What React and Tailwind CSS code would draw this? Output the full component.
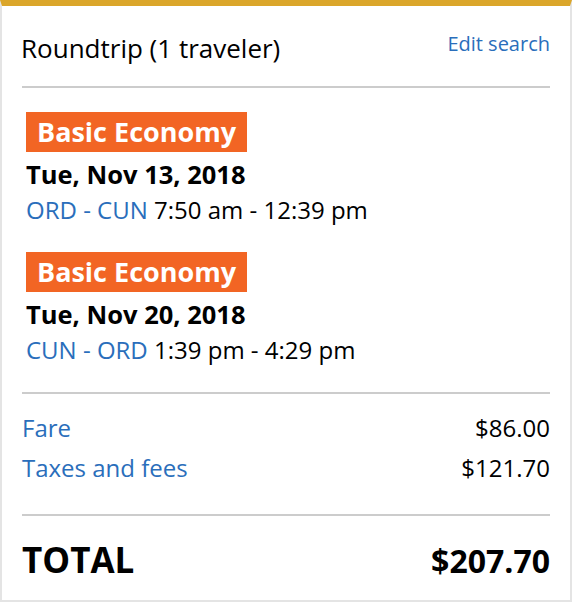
export default function App() {
  const legs = [
    { date: "Tue, Nov 13, 2018", route: "ORD - CUN", times: "7:50 am - 12:39 pm" },
    { date: "Tue, Nov 20, 2018", route: "CUN - ORD", times: "1:39 pm - 4:29 pm" },
  ]

  return (
    <div
      className="w-[572px] h-[602px] bg-white border-x-2 border-b-2 border-[#e4e4e4] border-t-[6px] border-t-[#dba62a] px-5 text-black"
      style={{ fontFamily: '"Open Sans", "Liberation Sans", sans-serif' }}
    >
      {/* Header */}
      <div className="flex items-start justify-between pt-[26px]">
        <span className="text-[26px] leading-[32px] -ml-px">Roundtrip (1 traveler)</span>
        <a className="text-[20px] leading-[28px] text-[#2a6ebb] -mt-[2px]">Edit search</a>
      </div>
      <div className="h-[2px] bg-[#cccccc] mt-[22px]"></div>

      {/* Legs */}
      <div className="pl-1 pt-6 pb-[26px] flex flex-col gap-[26px]">
        {legs.map((leg) => (
          <div key={leg.date}>
            <div className="inline-block bg-[#f26524] text-white font-bold text-[27px] leading-[40px] h-10 px-[11px]">
              Basic Economy
            </div>
            <div className="font-bold text-[25.5px] leading-[32px] mt-[6px]">{leg.date}</div>
            <div className="text-[24px] leading-[32px] mt-1">
              <span className="text-[#2a6ebb]">{leg.route}</span> {leg.times}
            </div>
          </div>
        ))}
      </div>
      <div className="h-[2px] bg-[#cccccc]"></div>

      {/* Price breakdown */}
      <div className="pt-[14px] pb-[26px] text-[24px] leading-[40px]">
        <div className="flex justify-between">
          <span className="text-[#2a6ebb]">Fare</span>
          <span>$86.00</span>
        </div>
        <div className="flex justify-between">
          <span className="text-[#2a6ebb]">Taxes and fees</span>
          <span>$121.70</span>
        </div>
      </div>
      <div className="h-[2px] bg-[#cccccc]"></div>

      {/* Total */}
      <div className="flex justify-between items-baseline pt-[22px] font-bold">
        <span className="text-[35px] leading-[44px]">TOTAL</span>
        <span className="text-[32px] leading-[44px]">$207.70</span>
      </div>
    </div>
  )
}
